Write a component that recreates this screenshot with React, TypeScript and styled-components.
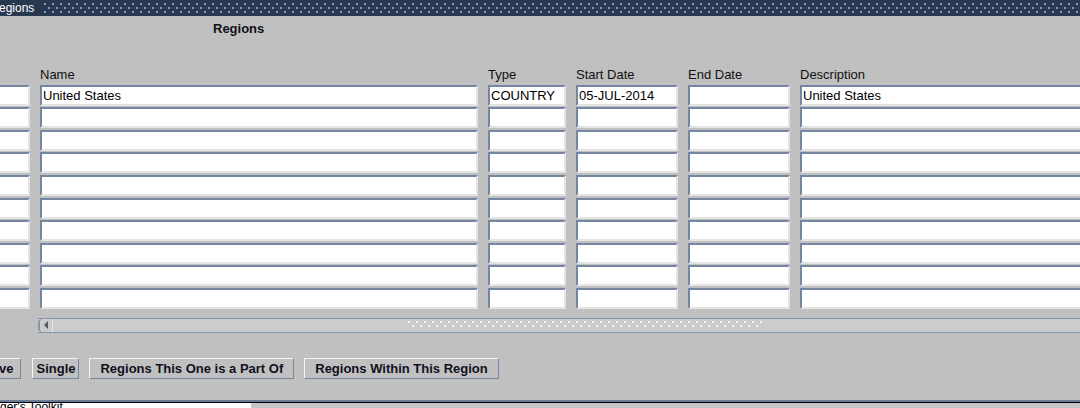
import React from 'react'
import styled, { createGlobalStyle } from 'styled-components'

const Global = createGlobalStyle`
  html, body { margin: 0; padding: 0; background: #c0c0c0; }
  body { font-family: "Liberation Sans", Arial, sans-serif; }
`

const columns = ['', 'Name', 'Type', 'Start Date', 'End Date', 'Description']

const rows = [
  ['', 'United States', 'COUNTRY', '05-JUL-2014', '', 'United States'],
  ...Array.from({ length: 9 }, () => ['', '', '', '', '', '']),
]

export default function App() {
  return (
    <>
      <Global />
      <Window>
        <TitleBar>
          <TitleText>egions</TitleText>
          <Dots />
        </TitleBar>
        <Body>
          <Heading>Regions</Heading>
          <Grid>
            {columns.map((c, i) => (
              <Label key={'l' + i}>{c}</Label>
            ))}
            {rows.map((r, ri) =>
              r.map((v, ci) => (
                <Field key={ri + '-' + ci}>{v}</Field>
              ))
            )}
          </Grid>
          <Scroll>
            <ArrowBtn>
              <svg width="6" height="8" viewBox="0 0 6 8">
                <path d="M5 0 L1 4 L5 8 Z" fill="#505a6a" />
              </svg>
            </ArrowBtn>
            <Thumb />
          </Scroll>
          <Buttons>
            <Button $cut>ve</Button>
            <Button>Single</Button>
            <Button $wide>Regions This One is a Part Of</Button>
            <Button $wide>Regions Within This Region</Button>
          </Buttons>
        </Body>
        <Status>
          <StatusText>ger's Toolkit</StatusText>
          <StatusRest />
        </Status>
      </Window>
    </>
  )
}

const Window = styled.div`
width: 1080px;
height: 408px;
overflow: hidden;
background: #c0c0c0;
display: flex;
flex-direction: column;
`

const TitleBar = styled.div`
height: 16px;
background: #283850;
display: flex;
align-items: center;
flex-shrink: 0;
`

const TitleText = styled.div`
color: #ffffff;
font-size: 12px;
line-height: 16px;
padding-right: 8px;
margin-left: -1px;
`

const Dots = styled.div`
flex: 1;
height: 12px;
background-image:
  radial-gradient(circle at 1px 1px, #8c9cb8 0.8px, transparent 1px),
  radial-gradient(circle at 1px 1px, #8c9cb8 0.8px, transparent 1px);
background-size: 8px 8px, 8px 8px;
background-position: 2px 1px, 6px 5px;
`

const Body = styled.div`
flex: 1;
display: flex;
flex-direction: column;
`

const Heading = styled.div`
font-weight: bold;
font-size: 13px;
color: #101018;
padding-left: 213px;
margin-top: 4px;
height: 18px;
line-height: 18px;
`

const Grid = styled.div`
margin-top: 27px;
margin-left: -40px;
display: grid;
grid-template-columns: 70px 438px 78px 102px 102px 320px;
column-gap: 10px;
row-gap: 1.6px;
`

const Label = styled.div`
box-sizing: border-box;
font-size: 13px;
color: #101010;
height: 18px;
padding-top: 2px;
line-height: 16px;
`

const Field = styled.div`
height: 21px;
box-sizing: border-box;
background: #ffffff;
border-top: 2px solid #7486a2;
border-left: 2px solid #7486a2;
border-right: 2px solid #e4e4e4;
border-bottom: 2px solid #e4e4e4;
font-size: 13px;
line-height: 17px;
padding-left: 1px;
color: #000;
white-space: nowrap;
overflow: hidden;
`

const Scroll = styled.div`
margin-top: 9px;
margin-left: 38px;
height: 15px;
box-sizing: border-box;
background: #cccccc;
border-top: 1px solid #8494ac;
border-bottom: 1px solid #8494ac;
display: flex;
align-items: stretch;
`

const ArrowBtn = styled.div`
width: 15px;
box-sizing: border-box;
border-right: 1px solid #e8e8e8;
border-left: 2px solid #8494ac;
border-radius: 4px 0 0 4px;
display: flex;
align-items: center;
justify-content: center;
`

const Thumb = styled.div`
margin-left: 355px;
width: 356px;
background-image:
  radial-gradient(circle at 1px 1px, #f4f4f4 0.8px, transparent 1px),
  radial-gradient(circle at 1px 1px, #f4f4f4 0.8px, transparent 1px);
background-size: 8px 8px, 8px 8px;
background-position: 0px 2px, 4px 6px;
background-repeat: repeat-x;
`

const Buttons = styled.div`
margin-top: 25px;
display: flex;
gap: 10px;
`

const Button = styled.div<{ $cut?: boolean; $wide?: boolean }>`
height: 21px;
box-sizing: border-box;
border-top: 1px solid #f4f4f4;
border-left: ${p => (p.$cut ? '0' : '1px solid #f4f4f4')};
border-right: 1px solid #7486a2;
border-bottom: 1px solid #7486a2;
background: #c0c0c0;
font-weight: bold;
font-size: 13px;
color: #101020;
line-height: 19px;
padding: 0 ${p => (p.$wide ? '10px' : p.$cut ? '7px' : '3px')};
padding-left: ${p => (p.$cut ? '0' : p.$wide ? '10px' : '3px')};
margin-left: ${p => (p.$cut ? '-1px' : '0')};
margin-right: ${p => (p.$cut ? '1px' : '0')};
white-space: nowrap;
`

const Status = styled.div`
height: 6px;
border-top: 2px solid #6a7a96;
display: flex;
flex-shrink: 0;
`

const StatusText = styled.div`
width: 251px;
background: #ffffff;
border-top: 1px solid #000;
font-size: 12px;
line-height: 8px;
color: #000;
overflow: hidden;
`

const StatusRest = styled.div`
flex: 1;
background: #c4c4c4;
border-top: 1px solid #000;
`
